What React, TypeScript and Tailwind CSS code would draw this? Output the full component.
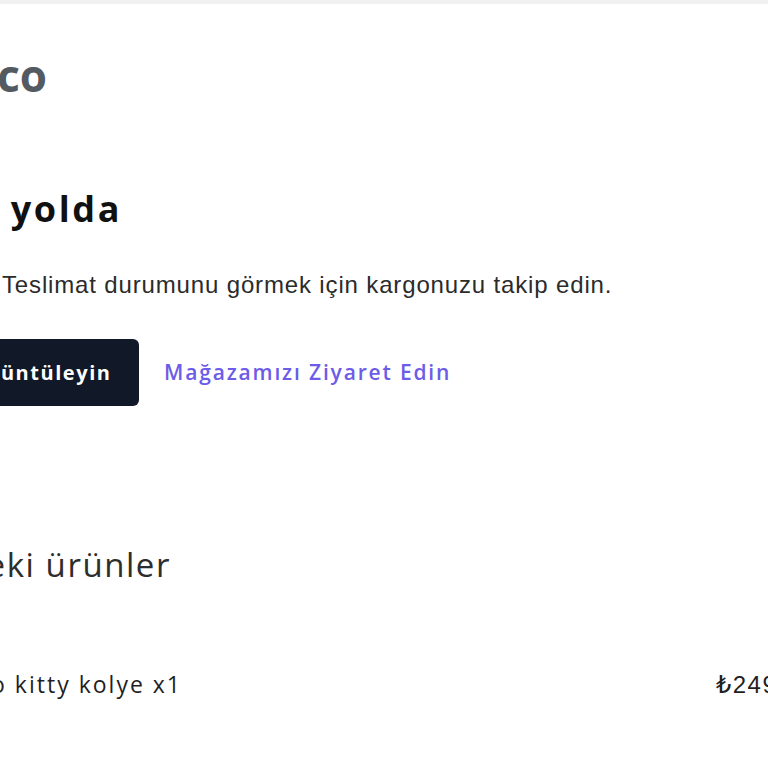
import React from "react";

export default function App() {
  return (
    <div className="w-[768px] h-[768px] overflow-hidden bg-white">
      <div className="h-[4px] bg-[#f1f1f1]" />
      <div className="ml-[-400px] flex flex-col whitespace-nowrap leading-none">
        {/* logo */}
        <div className="mt-[49px] w-[447px] shrink-0 text-right font-['Open_Sans',sans-serif] font-bold text-[44px] text-[#545a61] h-[44px]">
          Minico
        </div>
        {/* heading */}
        <div className="mt-[94px] w-[522px] shrink-0 text-right font-['Open_Sans',sans-serif] font-bold text-[36px] tracking-[2.6px] text-[#111111] h-[36px]">
          Siparişiniz yolda
        </div>
        {/* paragraph */}
        <div className="mt-[46px] ml-[402px] font-['Liberation_Sans',Arial,sans-serif] text-[24px] tracking-[0.85px] text-[#2b2b2b] h-[24px]">
          Teslimat durumunu görmek için kargonuzu takip edin.
        </div>
        {/* buttons */}
        <div className="mt-[42px] flex items-center">
          <div className="w-[539px] shrink-0 flex justify-end">
            <div className="h-[67px] pl-[28px] pr-[27.5px] flex items-center rounded-[6px] bg-[#111827] text-white font-['Open_Sans',sans-serif] font-bold text-[20px] tracking-[1.55px]">
              Siparişinizi görüntüleyin
            </div>
          </div>
          <div className="ml-[25px] shrink-0 font-['Open_Sans',sans-serif] font-semibold text-[21px] tracking-[1.83px] text-[#6c5ce7]">
            Mağazamızı Ziyaret Edin
          </div>
        </div>
        {/* items heading */}
        <div className="mt-[142px] w-[571px] shrink-0 text-right font-['Open_Sans',sans-serif] text-[33px] tracking-[1.55px] text-[#2d2d2d] h-[33px]">
          Gönderideki ürünler
        </div>
        {/* item row */}
        <div className="mt-[92px] flex items-baseline">
          <div className="w-[582px] shrink-0 text-right font-['Open_Sans',sans-serif] text-[23px] tracking-[2px] text-[#1f1f1f]">
            Hello kitty kolye x1
          </div>
          <div className="ml-[534px] shrink-0 font-['Liberation_Sans','DejaVu_Sans',sans-serif] text-[24px] tracking-[1.5px] text-[#1f1f1f]">
            ₺249,00
          </div>
        </div>
      </div>
    </div>
  );
}
